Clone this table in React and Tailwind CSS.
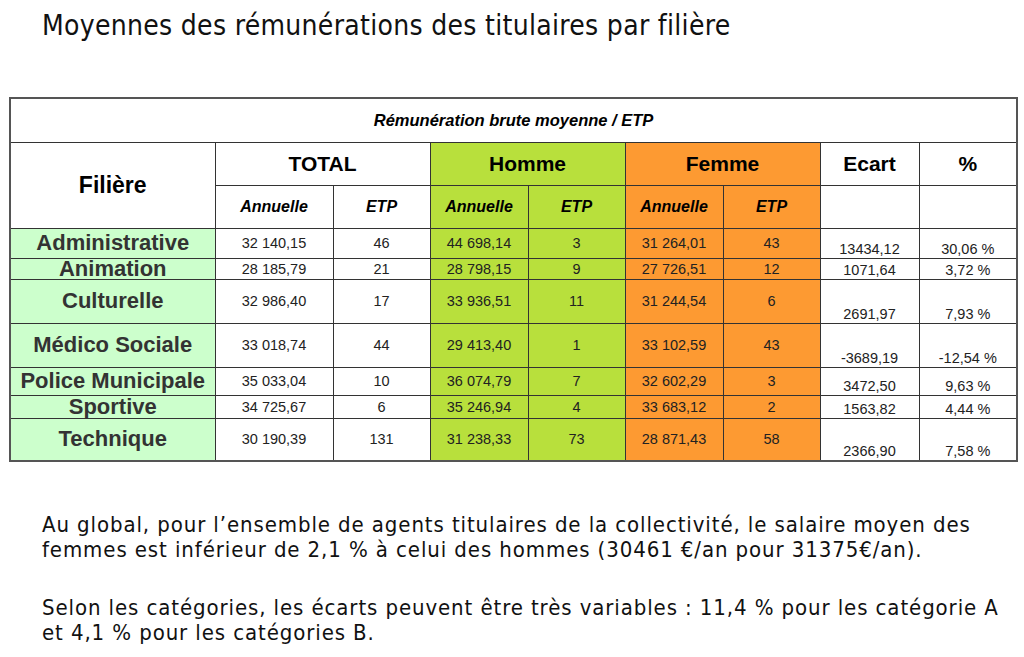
const rows = [
  { name: "Administrative", h: "h-[30px]", total: "32 140,15", totalEtp: "46", homme: "44 698,14", hommeEtp: "3", femme: "31 264,01", femmeEtp: "43", ecart: "13434,12", pct: "30,06 %" },
  { name: "Animation", h: "h-[21px]", total: "28 185,79", totalEtp: "21", homme: "28 798,15", hommeEtp: "9", femme: "27 726,51", femmeEtp: "12", ecart: "1071,64", pct: "3,72 %" },
  { name: "Culturelle", h: "h-[44px]", total: "32 986,40", totalEtp: "17", homme: "33 936,51", hommeEtp: "11", femme: "31 244,54", femmeEtp: "6", ecart: "2691,97", pct: "7,93 %" },
  { name: "Médico Sociale", h: "h-[44px]", total: "33 018,74", totalEtp: "44", homme: "29 413,40", hommeEtp: "1", femme: "33 102,59", femmeEtp: "43", ecart: "-3689,19", pct: "-12,54 %" },
  { name: "Police Municipale", h: "h-[28px]", total: "35 033,04", totalEtp: "10", homme: "36 074,79", hommeEtp: "7", femme: "32 602,29", femmeEtp: "3", ecart: "3472,50", pct: "9,63 %" },
  { name: "Sportive", h: "h-[23px]", total: "34 725,67", totalEtp: "6", homme: "35 246,94", hommeEtp: "4", femme: "33 683,12", femmeEtp: "2", ecart: "1563,82", pct: "4,44 %" },
  { name: "Technique", h: "h-[43px]", total: "30 190,39", totalEtp: "131", homme: "31 238,33", hommeEtp: "73", femme: "28 871,43", femmeEtp: "58", ecart: "2366,90", pct: "7,58 %" },
]

const cell = "border border-[#333] p-0 text-center"
const num = `${cell} align-middle text-[14.5px] leading-[14px] text-[#222]`
const bottom = `${cell} align-bottom pb-[2px] text-[14.5px] leading-[14px] text-[#222]`
const green = "bg-[#b8e03c]"
const orange = "bg-[#fd9a32]"

const App = () => {
  return (
    <main
      className="w-[1024px] h-[657px] bg-white overflow-hidden text-black"
      style={{ fontFamily: '"DejaVu Sans Condensed", "DejaVu Sans", sans-serif', fontStretch: "condensed" }}
    >
      <h1 className="ml-[42px] pt-[9px] text-[28px] leading-[34px] tracking-[0.3px] text-[#111]">
        Moyennes des rémunérations des titulaires par filière
      </h1>

      <table
        className="ml-[9px] mt-[54px] w-[1008px] table-fixed border-collapse border-2 border-[#555]"
        style={{ fontFamily: '"Liberation Sans", Arial, sans-serif', fontStretch: "normal" }}
      >
        <colgroup>
          <col className="w-[205px]" />
          <col className="w-[118px]" />
          <col className="w-[97px]" />
          <col className="w-[98px]" />
          <col className="w-[97px]" />
          <col className="w-[98px]" />
          <col className="w-[97px]" />
          <col className="w-[99px]" />
          <col className="w-[98px]" />
        </colgroup>
        <thead>
          <tr>
            <th colSpan={9} className={`${cell} h-[44px] text-[16.5px] font-bold italic`}>
              Rémunération brute moyenne / ETP
            </th>
          </tr>
          <tr>
            <th rowSpan={2} className={`${cell} text-[23px] font-bold`}>
              Filière
            </th>
            <th colSpan={2} className={`${cell} h-[43px] text-[21px] font-bold`}>
              TOTAL
            </th>
            <th colSpan={2} className={`${cell} ${green} text-[21px] font-bold`}>
              Homme
            </th>
            <th colSpan={2} className={`${cell} ${orange} text-[21px] font-bold`}>
              Femme
            </th>
            <th className={`${cell} text-[21px] font-bold`}>Ecart</th>
            <th className={`${cell} text-[21px] font-bold`}>%</th>
          </tr>
          <tr>
            <th className={`${cell} h-[43px] text-[16px] font-bold italic`}>Annuelle</th>
            <th className={`${cell} text-[16px] font-bold italic`}>ETP</th>
            <th className={`${cell} ${green} text-[16px] font-bold italic`}>Annuelle</th>
            <th className={`${cell} ${green} text-[16px] font-bold italic`}>ETP</th>
            <th className={`${cell} ${orange} text-[16px] font-bold italic`}>Annuelle</th>
            <th className={`${cell} ${orange} text-[16px] font-bold italic`}>ETP</th>
            <th className={cell}></th>
            <th className={cell}></th>
          </tr>
        </thead>
        <tbody>
          {rows.map((row) => (
            <tr key={row.name}>
              <td className={`${cell} ${row.h} bg-[#ccffcc] align-middle text-[22px] leading-[16px] font-bold text-[#333]`}>
                {row.name}
              </td>
              <td className={num}>{row.total}</td>
              <td className={num}>{row.totalEtp}</td>
              <td className={`${num} ${green}`}>{row.homme}</td>
              <td className={`${num} ${green}`}>{row.hommeEtp}</td>
              <td className={`${num} ${orange}`}>{row.femme}</td>
              <td className={`${num} ${orange}`}>{row.femmeEtp}</td>
              <td className={bottom}>{row.ecart}</td>
              <td className={bottom}>{row.pct}</td>
            </tr>
          ))}
        </tbody>
      </table>

      <div className="ml-[42px] mt-[50px] text-[22px] leading-[25px] tracking-[0.9px] whitespace-nowrap text-[#111]">
        <p>
          Au global, pour l’ensemble de agents titulaires de la collectivité, le salaire moyen des
          <br />
          femmes est inférieur de 2,1 % à celui des hommes (30461 €/an pour 31375€/an).
        </p>
        <p className="mt-[33px]">
          Selon les catégories, les écarts peuvent être très variables : 11,4 % pour les catégorie A
          <br />
          et 4,1 % pour les catégories B.
        </p>
      </div>
    </main>
  )
}

export default App
